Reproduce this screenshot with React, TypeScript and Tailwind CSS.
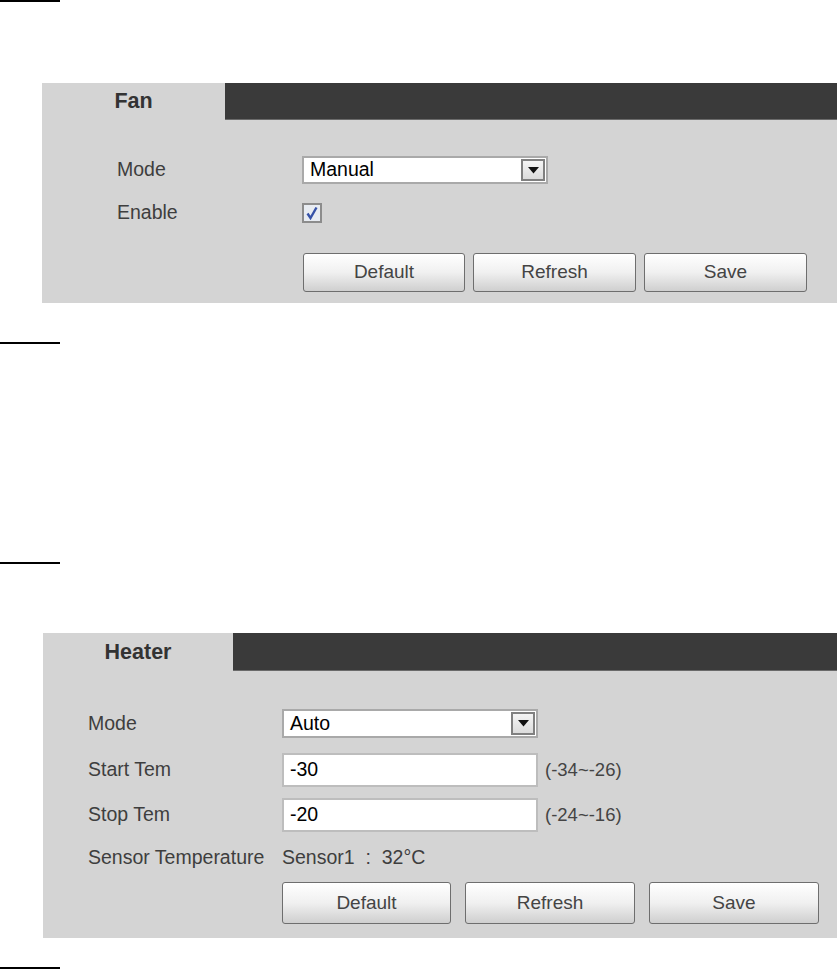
import React from 'react';

const Rule: React.FC<{ className?: string }> = ({ className = '' }) => (
  <div className={`h-[2px] w-[60px] bg-black ${className}`} />
);

const SelectBox: React.FC<{ value: string; width: string; height: string }> = ({ value, width, height }) => (
  <div className={`flex items-center border-2 border-[#a9a9a9] bg-white ${width} ${height}`}>
    <span className="flex-1 pl-[6px] text-[19.5px] leading-none text-black">{value}</span>
    <div className="mr-[1px] flex h-[calc(100%-2px)] w-[24px] items-center justify-center border-2 border-[#808080] bg-gradient-to-b from-[#f4f4f4] to-[#dcdcdc]">
      <svg width="11" height="7" viewBox="0 0 11 7">
        <path d="M0 0 H11 L5.5 6.5 Z" fill="#111" />
      </svg>
    </div>
  </div>
);

const TextBox: React.FC<{ value: string }> = ({ value }) => (
  <div className="flex h-[34px] w-[256px] items-center border-2 border-[#bdbdbd] bg-white pl-[6px] text-[19.5px] leading-none text-black">
    {value}
  </div>
);

const Btn: React.FC<{ label: string; className: string }> = ({ label, className }) => (
  <button
    className={`rounded-[3px] border-[1.5px] border-[#6e6e6e] bg-gradient-to-b from-[#ffffff] via-[#f0f0f0] to-[#cfcfcf] text-[19px] text-[#444] ${className}`}
  >
    {label}
  </button>
);

const Tab: React.FC<{ title: string; tabWidth: string; height: string }> = ({ title, tabWidth, height }) => (
  <div className={`flex ${height}`}>
    <div className={`flex items-center justify-center text-[21.5px] font-bold text-[#333] ${tabWidth}`}>{title}</div>
    <div className="flex-1 border-b border-[#6a6a6a] bg-[#3a3a3a]" />
  </div>
);

const App: React.FC = () => {
  return (
    <div className="h-[969px] w-[837px] overflow-hidden bg-white font-['Arial','Liberation_Sans',sans-serif]">
      <Rule />

      {/* Fan */}
      <div className="ml-[42px] mt-[81px] h-[220px] bg-[#d4d4d4]">
        <Tab title="Fan" tabWidth="w-[183px]" height="h-[37px]" />
        <div className="pl-[75px] pt-[36px]">
          <div className="flex h-[28px] items-center">
            <span className="w-[185px] text-[19.5px] text-[#3e3e3e]">Mode</span>
            <SelectBox value="Manual" width="w-[246px]" height="h-[28px]" />
          </div>
          <div className="mt-[19px] flex h-[20px] items-center">
            <span className="w-[185px] text-[19.5px] text-[#3e3e3e]">Enable</span>
            <div className="flex h-[20px] w-[20px] items-center justify-center border-2 border-[#8c8c8c] bg-[#e8ecf2]">
              <svg width="14" height="14" viewBox="0 0 14 14">
                <path d="M2.5 7.5 L5.5 12 L11.5 1.5" fill="none" stroke="#3652a8" strokeWidth="2.4" />
              </svg>
            </div>
          </div>
          <div className="mt-[30px] flex gap-[8px] pl-[186px]">
            <Btn label="Default" className="h-[39px] w-[162px]" />
            <Btn label="Refresh" className="h-[39px] w-[163px]" />
            <Btn label="Save" className="h-[39px] w-[163px]" />
          </div>
        </div>
      </div>

      <Rule className="mt-[39px]" />
      <Rule className="mt-[218px]" />

      {/* Heater */}
      <div className="ml-[43px] mt-[69px] h-[305px] bg-[#d4d4d4]">
        <Tab title="Heater" tabWidth="w-[190px]" height="h-[38px]" />
        <div className="pl-[45px] pt-[38px]">
          <div className="flex h-[29px] items-center">
            <span className="w-[194px] text-[19.5px] text-[#3e3e3e]">Mode</span>
            <SelectBox value="Auto" width="w-[256px]" height="h-[29px]" />
          </div>
          <div className="mt-[15px] flex h-[33px] items-center">
            <span className="w-[194px] text-[19.5px] text-[#3e3e3e]">Start Tem</span>
            <TextBox value="-30" />
            <span className="ml-[7px] text-[18.5px] text-[#444]">(-34~-26)</span>
          </div>
          <div className="mt-[12px] flex h-[34px] items-center">
            <span className="w-[194px] text-[19.5px] text-[#3e3e3e]">Stop Tem</span>
            <TextBox value="-20" />
            <span className="ml-[7px] text-[18.5px] text-[#444]">(-24~-16)</span>
          </div>
          <div className="mt-[12px] flex h-[28px] items-center">
            <span className="w-[194px] text-[19.5px] text-[#3e3e3e]">Sensor Temperature</span>
            <span className="text-[19.5px] text-[#3e3e3e]">Sensor1 &nbsp;:&nbsp; 32°C</span>
          </div>
          <div className="mt-[10px] flex gap-[14px] pl-[194px]">
            <Btn label="Default" className="h-[42px] w-[169px]" />
            <Btn label="Refresh" className="h-[42px] w-[170px]" />
            <Btn label="Save" className="h-[42px] w-[170px]" />
          </div>
        </div>
      </div>

      <Rule className="mt-[29px]" />
    </div>
  );
};

export default App;
